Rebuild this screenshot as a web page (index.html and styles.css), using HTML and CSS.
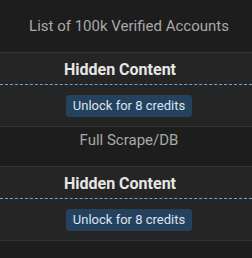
FILE: index.html
```html
<!DOCTYPE html>
<html lang="en">
<head>
  <meta charset="UTF-8" />
  <meta name="viewport" content="width=device-width, initial-scale=1.0"/>
  <title>List of 100k Verified Accounts</title>
  <link rel="stylesheet" href="styles.css">
</head>
<body>
  <div class="post">
    <p class="title">List of 100k Verified Accounts</p>

    <div class="hidden-box">
      <div class="hidden-head">Hidden Content</div>
      <div class="hidden-body">
        <button class="unlock">Unlock for 8 credits</button>
      </div>
    </div>

    <p class="label">Full Scrape/DB</p>

    <div class="hidden-box">
      <div class="hidden-head">Hidden Content</div>
      <div class="hidden-body">
        <button class="unlock">Unlock for 8 credits</button>
      </div>
    </div>
  </div>
</body>
</html>
```

FILE: styles.css
```css
body {
  font-family: Roboto, 'Liberation Sans', sans-serif;
  background: #1d1d1d;
  color: #a9a9a9;
  margin: 0;
  padding: 0;
}

.post {
  text-align: center;
}

p {
  margin: 0;
  font-size: 15px;
  line-height: 20px;
}

.title {
  padding: 16px 0 16px 6px;
}

.label {
  padding: 3px 0 16px 6px;
}

.hidden-box {
  background: #252525;
  border-top: 1px solid #333;
  border-bottom: 1px solid #333;
}

.hidden-head {
  color: #e6e6e6;
  font-weight: bold;
  font-size: 16px;
  line-height: 20px;
  padding: 7px 12px 4px 0;
  border-bottom: 1px dashed #6fa3d4;
}

.hidden-body {
  padding: 10px 0 9px 6px;
}

.unlock {
  font-family: inherit;
  font-size: 13px;
  line-height: 16px;
  height: 22px;
  padding: 3px 7px;
  color: #dde5ee;
  background: #24415e;
  border: none;
  border-radius: 3px;
  display: inline-block;
  vertical-align: top;
}
```
